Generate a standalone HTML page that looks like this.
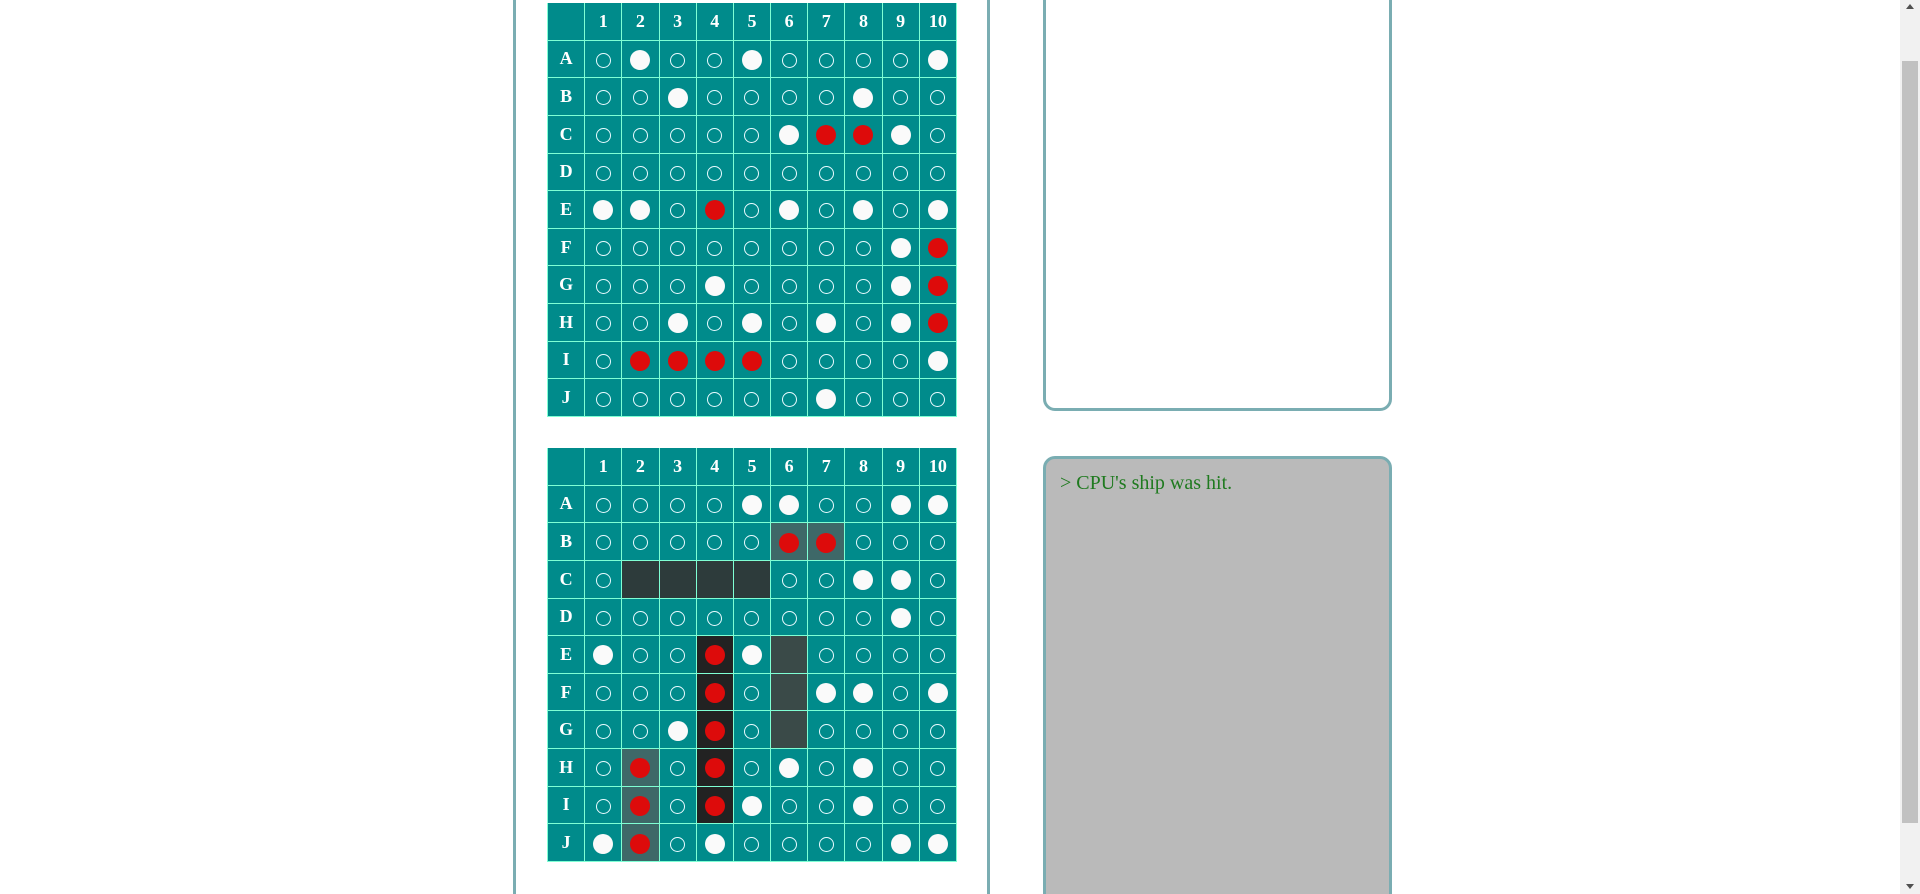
<!DOCTYPE html>
<html><head><style>
html,body{margin:0;padding:0;width:1920px;height:894px;overflow:hidden;background:#fff;font-family:"Liberation Serif",serif;}
#wrap{position:relative;width:1920px;height:894px;overflow:hidden;}
.box{position:absolute;border:3px solid #7aadb2;border-radius:12px;box-sizing:border-box;}
table{position:absolute;border-collapse:collapse;table-layout:fixed;width:410px;height:414px;background:#008b8b;}
td{border:1px solid #7fffd4;height:36px;padding:0;text-align:center;vertical-align:middle;color:#fff;font-weight:bold;font-size:18px;}
tr:first-child td{border-top:none}
td.e::after{content:"";display:inline-block;width:13px;height:13px;border:1px solid #e8fbff;border-radius:50%;vertical-align:middle;}
td.w::after,td.r::after{content:"";display:inline-block;width:20px;height:20px;border-radius:50%;background:#fafafa;vertical-align:middle;}
td.r::after{background:#dd0b0b;}
td.h{background:#3e6868}
td.k{background:#222}
td.d{background:#2d3b3b}
td.g{background:#3a4a48}
.sb{position:absolute;left:1900px;top:0;width:20px;height:894px;background:#f1f1f1}
.thumb{position:absolute;left:1902px;top:61px;width:16px;height:762px;background:#c1c1c1}
</style></head><body><div id="wrap">
<div class="box" style="left:513px;top:-30px;width:477px;height:960px"></div>
<div class="box" style="left:1043px;top:-30px;width:349px;height:441px"></div>
<div class="box" style="left:1043px;top:456px;width:349px;height:470px;background:#bababa"></div>
<div style="position:absolute;left:1060px;top:472px;font-size:20px;color:#1f7a1f">&gt; CPU's ship was hit.</div>

<table style="left:547px;top:3px">
<tr><td></td><td>1</td><td>2</td><td>3</td><td>4</td><td>5</td><td>6</td><td>7</td><td>8</td><td>9</td><td>10</td></tr>
<tr><td>A</td><td class="e"></td><td class="w"></td><td class="e"></td><td class="e"></td><td class="w"></td><td class="e"></td><td class="e"></td><td class="e"></td><td class="e"></td><td class="w"></td></tr>
<tr><td>B</td><td class="e"></td><td class="e"></td><td class="w"></td><td class="e"></td><td class="e"></td><td class="e"></td><td class="e"></td><td class="w"></td><td class="e"></td><td class="e"></td></tr>
<tr><td>C</td><td class="e"></td><td class="e"></td><td class="e"></td><td class="e"></td><td class="e"></td><td class="w"></td><td class="r"></td><td class="r"></td><td class="w"></td><td class="e"></td></tr>
<tr><td>D</td><td class="e"></td><td class="e"></td><td class="e"></td><td class="e"></td><td class="e"></td><td class="e"></td><td class="e"></td><td class="e"></td><td class="e"></td><td class="e"></td></tr>
<tr><td>E</td><td class="w"></td><td class="w"></td><td class="e"></td><td class="r"></td><td class="e"></td><td class="w"></td><td class="e"></td><td class="w"></td><td class="e"></td><td class="w"></td></tr>
<tr><td>F</td><td class="e"></td><td class="e"></td><td class="e"></td><td class="e"></td><td class="e"></td><td class="e"></td><td class="e"></td><td class="e"></td><td class="w"></td><td class="r"></td></tr>
<tr><td>G</td><td class="e"></td><td class="e"></td><td class="e"></td><td class="w"></td><td class="e"></td><td class="e"></td><td class="e"></td><td class="e"></td><td class="w"></td><td class="r"></td></tr>
<tr><td>H</td><td class="e"></td><td class="e"></td><td class="w"></td><td class="e"></td><td class="w"></td><td class="e"></td><td class="w"></td><td class="e"></td><td class="w"></td><td class="r"></td></tr>
<tr><td>I</td><td class="e"></td><td class="r"></td><td class="r"></td><td class="r"></td><td class="r"></td><td class="e"></td><td class="e"></td><td class="e"></td><td class="e"></td><td class="w"></td></tr>
<tr><td>J</td><td class="e"></td><td class="e"></td><td class="e"></td><td class="e"></td><td class="e"></td><td class="e"></td><td class="w"></td><td class="e"></td><td class="e"></td><td class="e"></td></tr>
</table>

<table style="left:547px;top:448px">
<tr><td></td><td>1</td><td>2</td><td>3</td><td>4</td><td>5</td><td>6</td><td>7</td><td>8</td><td>9</td><td>10</td></tr>
<tr><td>A</td><td class="e"></td><td class="e"></td><td class="e"></td><td class="e"></td><td class="w"></td><td class="w"></td><td class="e"></td><td class="e"></td><td class="w"></td><td class="w"></td></tr>
<tr><td>B</td><td class="e"></td><td class="e"></td><td class="e"></td><td class="e"></td><td class="e"></td><td class="r h"></td><td class="r h"></td><td class="e"></td><td class="e"></td><td class="e"></td></tr>
<tr><td>C</td><td class="e"></td><td class="d"></td><td class="d"></td><td class="d"></td><td class="d"></td><td class="e"></td><td class="e"></td><td class="w"></td><td class="w"></td><td class="e"></td></tr>
<tr><td>D</td><td class="e"></td><td class="e"></td><td class="e"></td><td class="e"></td><td class="e"></td><td class="e"></td><td class="e"></td><td class="e"></td><td class="w"></td><td class="e"></td></tr>
<tr><td>E</td><td class="w"></td><td class="e"></td><td class="e"></td><td class="r k"></td><td class="w"></td><td class="g"></td><td class="e"></td><td class="e"></td><td class="e"></td><td class="e"></td></tr>
<tr><td>F</td><td class="e"></td><td class="e"></td><td class="e"></td><td class="r k"></td><td class="e"></td><td class="g"></td><td class="w"></td><td class="w"></td><td class="e"></td><td class="w"></td></tr>
<tr><td>G</td><td class="e"></td><td class="e"></td><td class="w"></td><td class="r k"></td><td class="e"></td><td class="g"></td><td class="e"></td><td class="e"></td><td class="e"></td><td class="e"></td></tr>
<tr><td>H</td><td class="e"></td><td class="r h"></td><td class="e"></td><td class="r k"></td><td class="e"></td><td class="w"></td><td class="e"></td><td class="w"></td><td class="e"></td><td class="e"></td></tr>
<tr><td>I</td><td class="e"></td><td class="r h"></td><td class="e"></td><td class="r k"></td><td class="w"></td><td class="e"></td><td class="e"></td><td class="w"></td><td class="e"></td><td class="e"></td></tr>
<tr><td>J</td><td class="w"></td><td class="r h"></td><td class="e"></td><td class="w"></td><td class="e"></td><td class="e"></td><td class="e"></td><td class="e"></td><td class="w"></td><td class="w"></td></tr>
</table>

<div class="sb"></div><div class="thumb"></div>
<div style="position:absolute;left:1906px;top:4px;width:0;height:0;border-left:4px solid transparent;border-right:4px solid transparent;border-bottom:5px solid #505050"></div>
<div style="position:absolute;left:1906px;top:884px;width:0;height:0;border-left:4px solid transparent;border-right:4px solid transparent;border-top:5px solid #505050"></div>
</div></body></html>
